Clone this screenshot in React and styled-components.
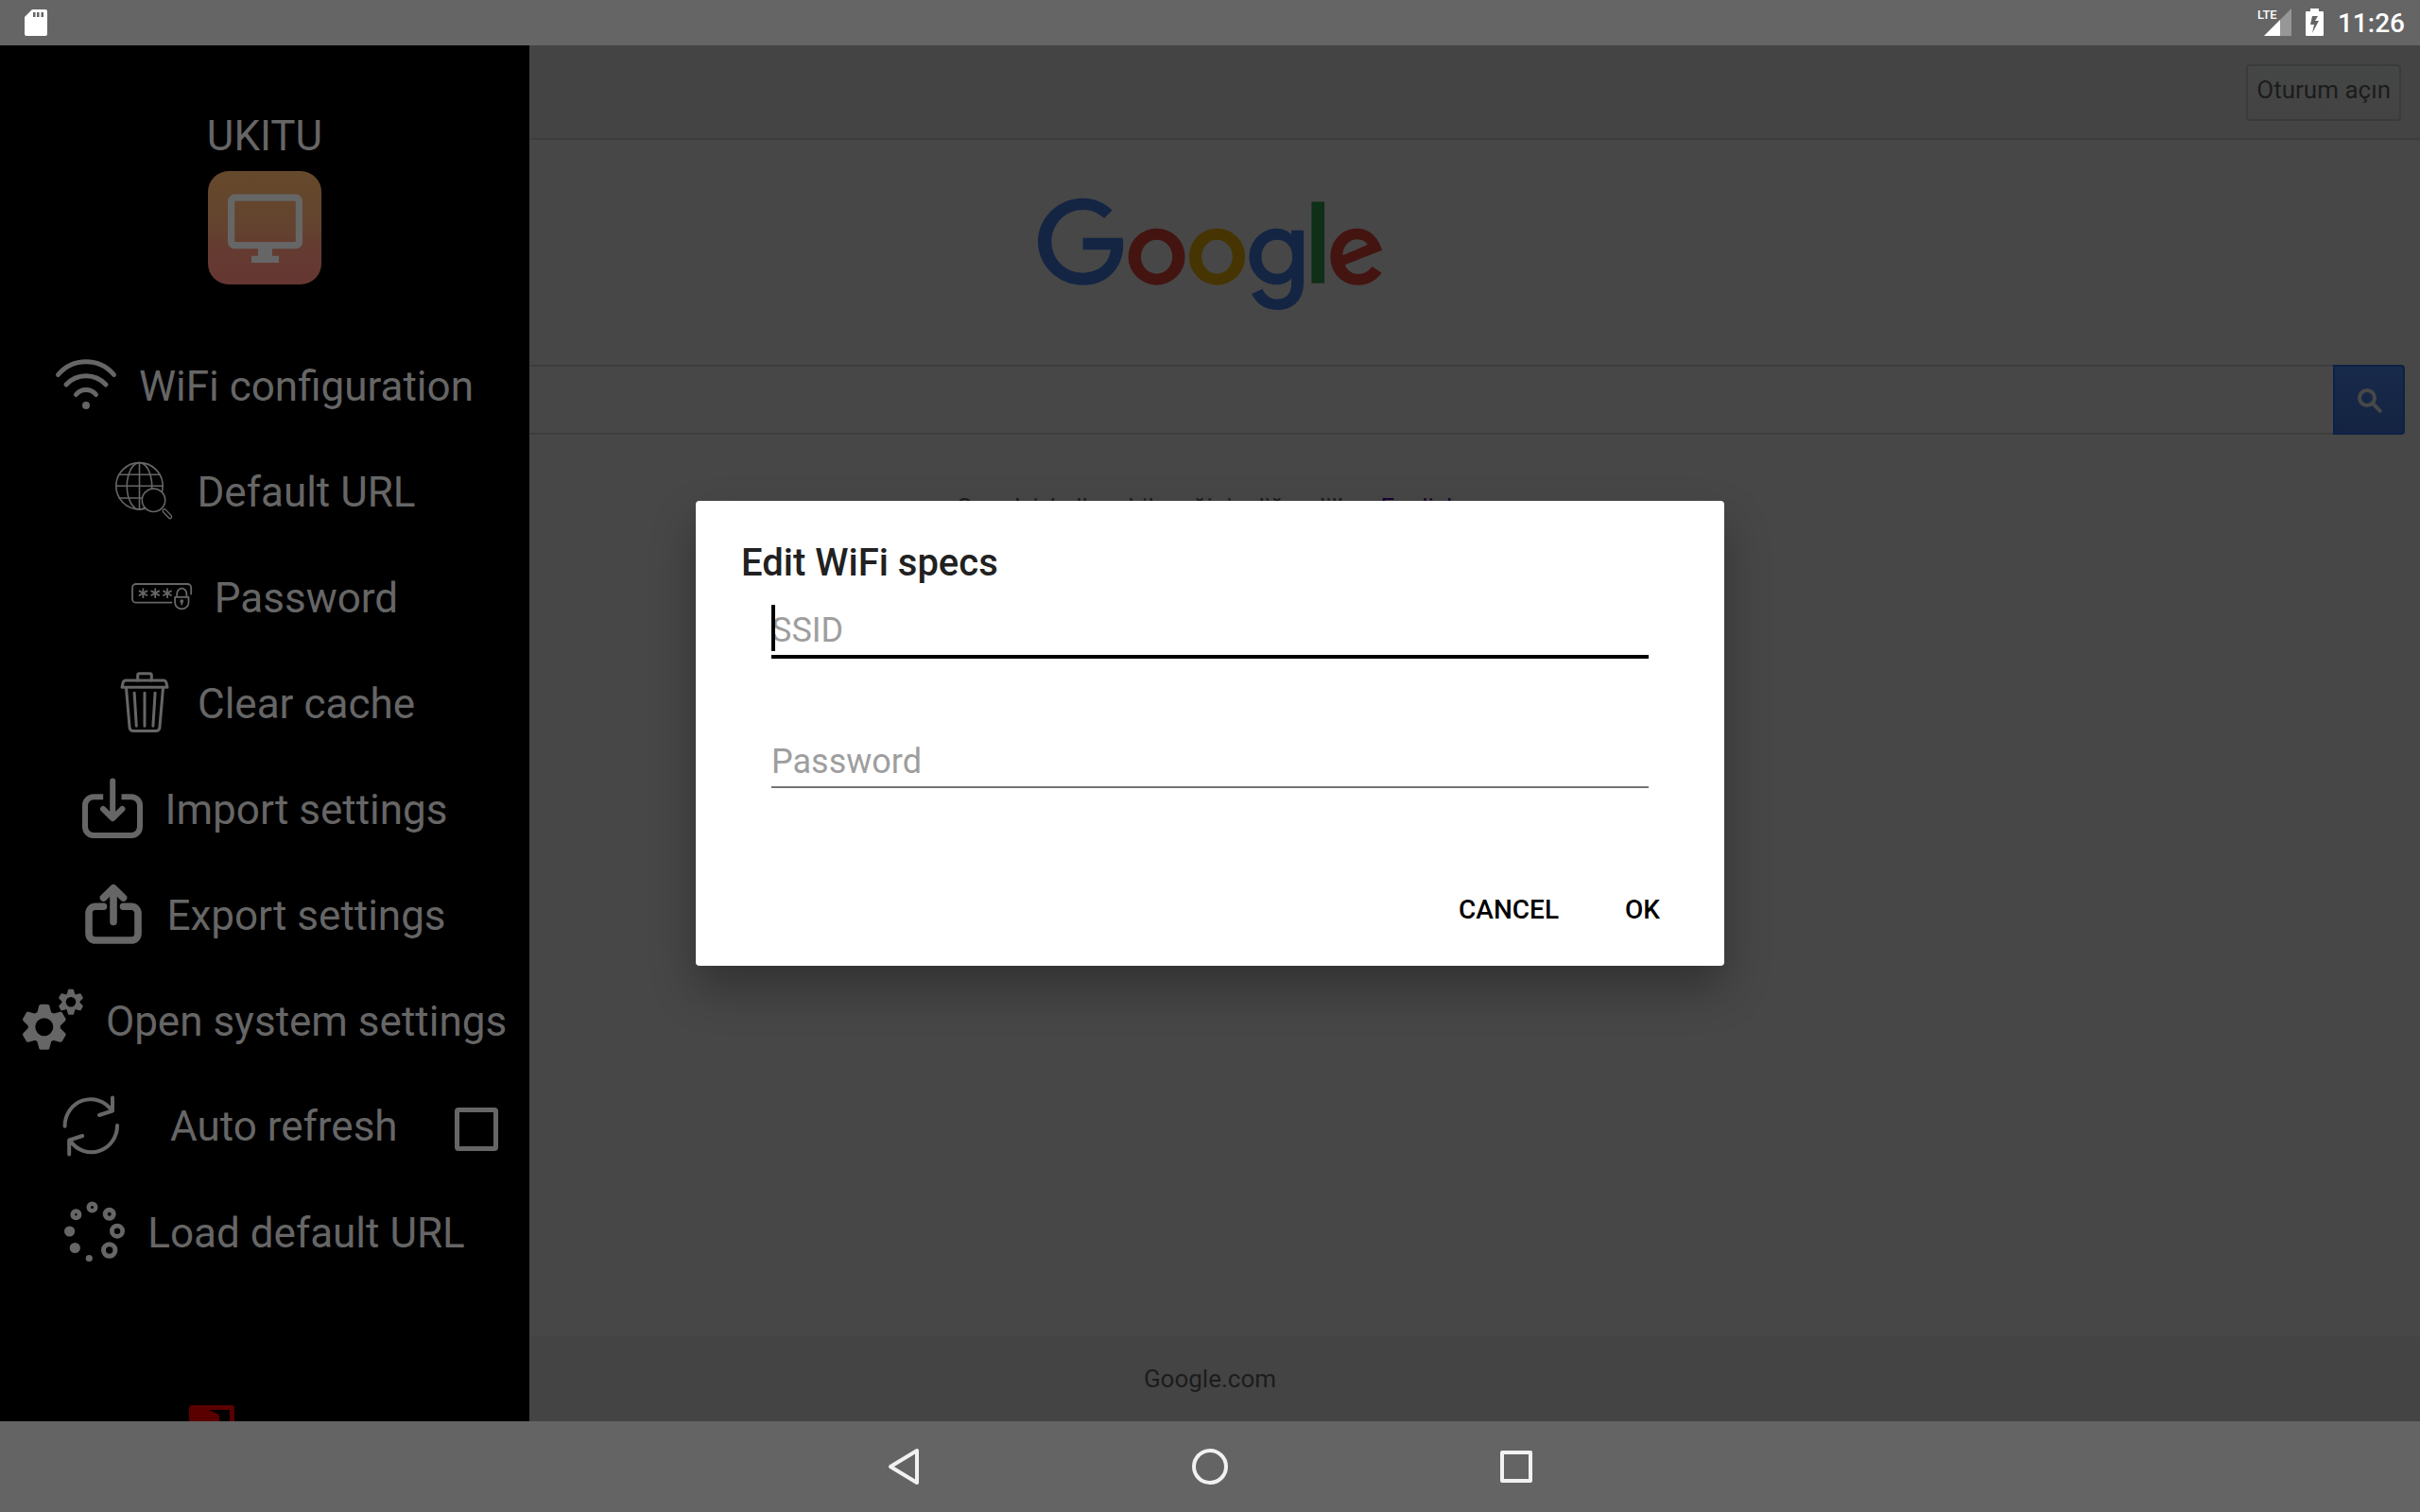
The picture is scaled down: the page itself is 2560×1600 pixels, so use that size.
import { useState } from "react";
import styled, { createGlobalStyle } from "styled-components";

const GlobalStyle = createGlobalStyle`
  *,
  *::before,
  *::after {
    box-sizing: border-box;
  }

  body {
    margin: 0;
    background: #000;
    font-family: Roboto, "Noto Sans", sans-serif;
  }

  button,
  input {
    font: inherit;
  }

  button {
    border: none;
    padding: 0;
    background: none;
    color: inherit;
    cursor: pointer;
  }

  svg {
    display: block;
    flex: none;
  }
`;

const Screen = styled.div`
  display: grid;
  grid-template-rows: 48px 1fr 96px;
  height: 100vh;
`;

/* Status bar */

const StatusBar = styled.header`
  display: flex;
  align-items: center;
  justify-content: space-between;
  padding: 0 16px 0 24px;
  background: #656565;
  color: #fff;
`;

const StatusIcons = styled.div`
  display: flex;
  align-items: center;
  gap: 15px;
`;

const Network = styled.div`
  display: flex;
  align-items: flex-start;
  position: relative;
  padding-left: 6px;
`;

const NetworkType = styled.span`
  position: absolute;
  top: 0;
  left: 0;
  font-size: 13px;
  line-height: 14px;
  font-weight: 500;
`;

const Clock = styled.time`
  padding-top: 2px;
  font-size: 28px;
  line-height: 32px;
  font-weight: 500;
`;

/* Browser page */

const Main = styled.main`
  position: relative;
  min-height: 0;
  overflow: hidden;
`;

const Page = styled.div`
  display: flex;
  flex-direction: column;
  align-items: center;
  height: 100%;
  background: #474747;
  color: #1c1c1c;
  font-size: 26px;
  line-height: 30px;
`;

const PageHeader = styled.div`
  display: flex;
  justify-content: flex-end;
  align-self: stretch;
  padding: 20px 20px 18px;
  border-bottom: 2px solid #3d3d3d;
  background: #444;
`;

const SignIn = styled.button`
  height: 60px;
  padding: 0 9px 6px;
  border: 2px solid #3b3b3b;
  border-radius: 4px;
  background: linear-gradient(#454646, #434343);
`;

const Logo = styled.div`
  padding: 61px 0 58px;
`;

const SearchForm = styled.form`
  display: flex;
  align-self: stretch;
  height: 74px;
  padding: 0 16px;
`;

const SearchInput = styled.input`
  flex: 1;
  min-width: 0;
  padding: 0 16px;
  border: 2px solid #3d3d3d;
  border-right: none;
  border-radius: 0;
  background: #474747;
  outline: none;
`;

const SearchButton = styled.button`
  display: grid;
  place-items: center;
  width: 76px;
  padding: 2px 0 0 2px;
  border: 2px solid #0c2147;
  border-radius: 0 4px 4px 0;
  background: linear-gradient(#182a4a, #142342);
`;

const Languages = styled.p`
  margin: 62px 0 0;
`;

const LanguageLink = styled.a`
  margin: 0 4px;
  color: #1c0530;
  text-decoration: none;
`;

const PageFooter = styled.footer`
  display: grid;
  place-items: center;
  align-self: stretch;
  height: 90px;
  margin-top: auto;
  background: #444;
`;

/* Drawer */

const Drawer = styled.aside`
  position: absolute;
  top: 0;
  bottom: 0;
  left: 0;
  display: flex;
  flex-direction: column;
  width: 560px;
  padding-top: 70px;
  overflow: hidden;
  background: #000;
  color: #666;
  font-size: 44px;
  line-height: 52px;
`;

const Brand = styled.div`
  display: flex;
  flex-direction: column;
  align-items: center;
  gap: 11px;
  margin-bottom: 51px;
`;

const BrandName = styled.h1`
  margin: 0;
  font-size: 44px;
  font-weight: 400;
`;

const DrawerItem = styled.button`
  display: flex;
  flex: none;
  align-items: center;
  justify-content: center;
  gap: 24px;
  height: 112px;
  white-space: nowrap;
`;

const ItemLabel = styled.span`
  padding-top: 2px;
`;

const DrawerToggle = styled.label`
  display: flex;
  flex: none;
  align-items: center;
  gap: 52px;
  height: 112px;
  padding-left: 64px;
  cursor: pointer;
`;

const Checkbox = styled.input`
  width: 46px;
  height: 46px;
  margin: 6px 0 0 8px;
  appearance: none;
  border: 5px solid #666;
  border-radius: 4px;

  &:checked {
    background: #666;
  }
`;

const ExitItem = styled(DrawerItem)`
  justify-content: flex-start;
  margin: 103px 0 0;
  padding-left: 200px;
  color: #5b0000;
`;

/* Dialog */

const DialogLayer = styled.div`
  position: absolute;
  inset: 0;
  display: grid;
  place-items: center;
`;

const Dialog = styled.form`
  display: flex;
  flex-direction: column;
  width: min(1088px, 90%);
  padding: 42px 48px 20px;
  border-radius: 4px;
  background: #fff;
  box-shadow: 0 24px 48px rgba(0, 0, 0, 0.3);
`;

const DialogTitle = styled.h2`
  margin: 0 0 20px;
  color: #212121;
  font-size: 40px;
  line-height: 48px;
  font-weight: 500;
`;

const Fields = styled.div`
  display: flex;
  flex-direction: column;
  gap: 82px;
  padding: 0 32px;
`;

const Field = styled.div`
  position: relative;
  padding-bottom: 3px;
  border-bottom: ${(props) =>
    props.$focused ? "4px solid #000" : "2px solid #757575"};
`;

const FieldInput = styled.input`
  display: block;
  width: 100%;
  height: 50px;
  padding: 4px 0 0;
  border: none;
  outline: none;
  background: none;
  caret-color: transparent;
  color: #212121;
  font-size: 36px;

  &::placeholder {
    color: #9e9e9e;
    opacity: 1;
  }
`;

const Caret = styled.span`
  position: absolute;
  top: 0;
  left: 0;
  width: 4px;
  height: 49px;
  background: #000;
`;

const Actions = styled.div`
  display: flex;
  justify-content: flex-end;
  gap: 30px;
  margin-top: 88px;
`;

const ActionButton = styled.button`
  height: 80px;
  padding: 0 20px;
  color: #000;
  font-size: 28px;
  font-weight: 500;
`;

/* Navigation bar */

const NavBar = styled.nav`
  display: flex;
  justify-content: center;
  background: #646464;
`;

const NavButton = styled.button`
  display: grid;
  place-items: center;
  width: 324px;
`;

function LineIcon({ width = 4, children }) {
  return (
    <svg
      width="64"
      height="64"
      viewBox="0 0 64 64"
      fill="none"
      stroke="currentColor"
      strokeWidth={width}
      strokeLinecap="round"
      strokeLinejoin="round"
      overflow="visible"
      aria-hidden="true"
    >
      {children}
    </svg>
  );
}

function WifiIcon() {
  return (
    <LineIcon width={5}>
      <path d="M2.5 20.5a38.6 38.6 0 0 1 59 0M11 31a28.3 28.3 0 0 1 42 0M21.5 41.5a13.7 13.7 0 0 1 21 0" />
      <circle cx="32" cy="53" r="4" fill="currentColor" stroke="none" />
    </LineIcon>
  );
}

function GlobeIcon() {
  return (
    <LineIcon width={1.6}>
      <circle cx="27.5" cy="26.3" r="24.7" />
      <ellipse cx="27.5" cy="26.3" rx="13.2" ry="24.7" />
      <path d="M27.5 1.6V51M6 14.3h43M2.8 26.3h49.4M6 39h43" />
      <circle cx="42.5" cy="41.3" r="12.2" fill="#000" />
      <path d="M54 52.6l5.8 6.2" strokeWidth="5" />
      <path d="M54 52.6l5.8 6.2" strokeWidth="2.2" stroke="#000" />
    </LineIcon>
  );
}

function PasswordIcon() {
  return (
    <LineIcon width={1.8}>
      <path d="M63.2 28.5V22a4 4 0 0 0-4-4H5a4 4 0 0 0-4 4v11.7a4 4 0 0 0 4 4h37.4" />
      {[12.4, 25.2, 38].map((x) => (
        <path
          key={x}
          d={`M${x} 23.2v9M${x - 4} 25.4l8 4.6M${x - 4} 30l8-4.6`}
        />
      ))}
      <path
        d="M46.1 31.8h14.4v5.6a7.2 7 0 0 1-14.4 0zM48.2 31.8v-3.4a5.1 5.8 0 0 1 10.2 0v3.4"
        fill="#000"
      />
      <circle cx="53.3" cy="36.2" r="1" fill="currentColor" />
      <path d="M53.3 36.5v3" />
    </LineIcon>
  );
}

function TrashIcon() {
  return (
    <LineIcon width={3}>
      <path d="M24.7 8V2.5a1.8 1.8 0 0 1 1.8-1.8h11a1.8 1.8 0 0 1 1.8 1.8V8" />
      <path d="M12 8h40a3 3 0 0 1 2.8 2.2l1.2 5.1H8l1.2-5.1A3 3 0 0 1 12 8z" />
      <path d="M12.5 16l3.6 42a4 4 0 0 0 4 3.6h23.8a4 4 0 0 0 4-3.6l3.6-42" />
      <path d="M21.1 21.2l2.2 35M32 21.2v35M43.1 21.2l-2.2 35" />
    </LineIcon>
  );
}

function ImportIcon() {
  return (
    <LineIcon width={6}>
      <path
        d="M22.2 19.3H12a9 9 0 0 0-9 9V51a9 9 0 0 0 9 9h40a9 9 0 0 0 9-9V28.3a9 9 0 0 0-9-9H41.5"
        strokeLinecap="butt"
      />
      <path d="M32.2 2.5v39M22 32l10.2 10L42.4 32" />
    </LineIcon>
  );
}

function ExportIcon() {
  return (
    <LineIcon width={7.6}>
      <path d="M21.5 23.3H13a7 7 0 0 0-7 7V52a7 7 0 0 0 7 7h38a7 7 0 0 0 7-7V30.3a7 7 0 0 0-7-7h-8.5" />
      <path d="M32 39.5V4M21.5 14L32 3.7 42.5 14" />
    </LineIcon>
  );
}

function Gear({ x, y, scale }) {
  return (
    <g transform={`translate(${x} ${y}) scale(${scale})`}>
      <circle r="13.3" strokeWidth="7.6" />
      {[0, 60, 120, 180, 240, 300].map((angle) => (
        <path
          key={angle}
          d="M-7.5-15l2-7.5Q-5-24-3.5-24h7Q5-24 5.500-22.5l2 7.5z"
          transform={`rotate(${angle})`}
          fill="currentColor"
          stroke="none"
        />
      ))}
    </g>
  );
}

function GearsIcon() {
  return (
    <LineIcon>
      <Gear x={22.8} y={38.7} scale={1} />
      <Gear x={51} y={12.3} scale={0.56} />
    </LineIcon>
  );
}

function RefreshIcon() {
  return (
    <LineIcon width={4}>
      <path d="M4.6 31.7A27.3 28 0 0 1 54 14.8M55 1.5v14L41 20" />
      <path d="M60 31A27.3 28 0 0 1 10.5 47.5M9.2 61.5v-15l14-4.5" />
    </LineIcon>
  );
}

const loaderDots = [
  [29.5, 5.5, 3.8, 4.4],
  [47.7, 12.7, 4.5, 5],
  [56, 30.7, 5.6, 4.8],
  [47.7, 51, 6.2, 5],
  [26.3, 59.5, 1.8, 3.6],
  [11.3, 48.5, 2.8, 5.6],
  [5.6, 31, 2.8, 5.6],
  [12.4, 13.3, 3.6, 4.8],
];

function LoaderIcon() {
  return (
    <LineIcon>
      {loaderDots.map(([cx, cy, r, width]) => (
        <circle key={`${cx}-${cy}`} cx={cx} cy={cy} r={r} strokeWidth={width} />
      ))}
    </LineIcon>
  );
}

function ExitIcon() {
  return (
    <svg width="64" height="64" viewBox="0 0 64 64" aria-hidden="true">
      <path
        fill="currentColor"
        fillRule="evenodd"
        d="M3 0h42a3 3 0 0 1 3 3v17h-5V5H21l9 4q2 1 2 3v36h11V36h5v14a3 3 0 0 1-3 3H32v11L2 52q-2-1-2-3V3a3 3 0 0 1 3-3zM50 18l14 10-14 10v-7H38v-6h12z"
      />
    </svg>
  );
}

function AppIcon() {
  return (
    <svg width="120" height="120" viewBox="0 0 120 120" aria-hidden="true">
      <defs>
        <linearGradient id="brand" x1="0" y1="0" x2="0" y2="1">
          <stop offset="0" stopColor="#66492b" />
          <stop offset="0.5" stopColor="#63432f" />
          <stop offset="0.65" stopColor="#643c31" />
          <stop offset="1" stopColor="#663632" />
        </linearGradient>
      </defs>
      <rect width="120" height="120" rx="22" fill="url(#brand)" />
      <rect
        x="24.6"
        y="28.2"
        width="71.8"
        height="50.5"
        rx="3.5"
        fill="none"
        stroke="#666"
        strokeWidth="7.2"
      />
      <path d="M53 80h15v9.7h7V97H46v-7.3h7z" fill="#666" />
    </svg>
  );
}

function GoogleLogo() {
  return (
    <svg
      width="364"
      height="119"
      viewBox="115 88 1093 357"
      fillRule="evenodd"
      role="img"
      aria-label="Google"
    >
      <path
        fill="#142544"
        d="M351 128C325 103 292 90 258 90 180 90 115 152 115 228s65 138 143 138c77 0 128-54 128-129 0-8-1-15-2-21H258v38h88c-5 44-40 73-88 73-56 0-100-44-100-99s44-101 100-101c26 0 49 10 67 27z"
      />
      <path
        fill="#441411"
        d="M402 276a90 90 0 1 1 180 0 90 90 0 1 1-180 0zm40 0a50 54 0 1 0 100 0 50 54 0 1 0-100 0z"
      />
      <path
        fill="#463502"
        d="M595 276a89 90 0 1 1 178 0 89 90 0 1 1-178 0zm40 0a49 54 0 1 0 98 0 49 54 0 1 0-98 0z"
      />
      <path
        fill="#142544"
        d="M959 192v165c0 57-34 88-84 88-42 0-69-25-81-51l34-16c8 18 23 33 47 33 29 0 45-18 45-50v-15h-1c-9 10-25 19-46 19-45 0-87-38-87-89s42-90 87-90c21 0 37 9 46 19h1v-13zm-134 84c0 32 22 54 50 54s48-22 48-54-20-54-48-54-50 22-50 54z"
      />
      <path fill="#0f2f18" d="M984 101h41v259h-41z" />
      <path
        fill="#441411"
        d="M1208 255c-13-43-42-69-79-69-48 0-85 38-85 90s38 90 88 90c33 0 58-16 75-39l-31-20c-10 15-24 24-44 24s-34-11-42-29zm-125 17c0-30 21-51 46-51 16 0 28 7 33 17z"
      />
    </svg>
  );
}

const menu = [
  { label: "WiFi configuration", icon: <WifiIcon /> },
  { label: "Default URL", icon: <GlobeIcon /> },
  { label: "Password", icon: <PasswordIcon /> },
  { label: "Clear cache", icon: <TrashIcon /> },
  { label: "Import settings", icon: <ImportIcon /> },
  { label: "Export settings", icon: <ExportIcon /> },
  { label: "Open system settings", icon: <GearsIcon /> },
];

function Status() {
  return (
    <StatusBar>
      <svg width="28" height="28" viewBox="0 0 28 28" aria-hidden="true">
        <path
          fill="#fff"
          fillRule="evenodd"
          d="M10 0h14a2 2 0 0 1 2 2v24a2 2 0 0 1-2 2H4a2 2 0 0 1-2-2V8zM11 3v5h2.5V3zm4 0v5h2.5V3zm4.5 0v5H22V3z"
        />
      </svg>
      <StatusIcons>
        <Network>
          <NetworkType>LTE</NetworkType>
          <svg width="30" height="30" viewBox="0 0 30 30" aria-hidden="true">
            <path d="M30 0v29H1z" fill="#979797" />
            <path d="M18 12v17H1z" fill="#fff" />
          </svg>
        </Network>
        <svg width="19" height="30" viewBox="0 0 19 30" aria-hidden="true">
          <path
            fill="#fff"
            fillRule="evenodd"
            d="M5 0h9v3h4q1 0 1 1v24q0 1-1 1H1q-1 0-1-1V4q0-1 1-1h4zM7 8L5 17h4l-2 9 7-13h-4l3-5z"
          />
        </svg>
        <Clock>11:26</Clock>
      </StatusIcons>
    </StatusBar>
  );
}

function BrowserPage() {
  return (
    <Page>
      <PageHeader>
        <SignIn type="button">Oturum açın</SignIn>
      </PageHeader>
      <Logo>
        <GoogleLogo />
      </Logo>
      <SearchForm onSubmit={(e) => e.preventDefault()}>
        <SearchInput type="text" aria-label="Google" />
        <SearchButton type="submit" aria-label="Google">
          <svg
            width="26"
            height="26"
            viewBox="0 0 26 26"
            fill="none"
            stroke="#484848"
            strokeWidth="4"
          >
            <circle cx="10" cy="10" r="8" />
            <path d="M16 16l9 9" />
          </svg>
        </SearchButton>
      </SearchForm>
      <Languages>
        Google'ı kullanabileceğiniz diğer diller:{" "}
        <LanguageLink href="#english">English</LanguageLink>
      </Languages>
      <PageFooter>Google.com</PageFooter>
    </Page>
  );
}

function SettingsDrawer() {
  const [autoRefresh, setAutoRefresh] = useState(false);

  return (
    <Drawer>
      <Brand>
        <BrandName>UKITU</BrandName>
        <AppIcon />
      </Brand>
      {menu.map(({ label, icon }) => (
        <DrawerItem key={label} type="button">
          {icon}
          <ItemLabel>{label}</ItemLabel>
        </DrawerItem>
      ))}
      <DrawerToggle>
        <RefreshIcon />
        Auto refresh
        <Checkbox
          type="checkbox"
          checked={autoRefresh}
          onChange={() => setAutoRefresh(!autoRefresh)}
        />
      </DrawerToggle>
      <DrawerItem type="button">
        <LoaderIcon />
        <ItemLabel>Load default URL</ItemLabel>
      </DrawerItem>
      <ExitItem type="button" aria-label="Exit">
        <ExitIcon />
      </ExitItem>
    </Drawer>
  );
}

function WifiDialog() {
  const [ssid, setSsid] = useState("");
  const [password, setPassword] = useState("");

  return (
    <DialogLayer>
      <Dialog
        role="dialog"
        aria-labelledby="wifi-title"
        onSubmit={(e) => e.preventDefault()}
      >
        <DialogTitle id="wifi-title">Edit WiFi specs</DialogTitle>
        <Fields>
          <Field $focused>
            <FieldInput
              type="text"
              aria-label="SSID"
              placeholder="SSID"
              value={ssid}
              onChange={(e) => setSsid(e.target.value)}
            />
            {!ssid && <Caret />}
          </Field>
          <Field>
            <FieldInput
              type="password"
              aria-label="Password"
              placeholder="Password"
              value={password}
              onChange={(e) => setPassword(e.target.value)}
            />
          </Field>
        </Fields>
        <Actions>
          <ActionButton type="button">CANCEL</ActionButton>
          <ActionButton type="submit">OK</ActionButton>
        </Actions>
      </Dialog>
    </DialogLayer>
  );
}

function Navigation() {
  const icon = {
    width: 40,
    height: 40,
    viewBox: "0 0 40 40",
    fill: "none",
    stroke: "#f1f1f1",
    strokeWidth: 4,
    strokeLinejoin: "round",
  };

  return (
    <NavBar>
      <NavButton type="button" aria-label="Back">
        <svg {...icon}>
          <path d="M34 3v34L6 20z" />
        </svg>
      </NavButton>
      <NavButton type="button" aria-label="Home">
        <svg {...icon}>
          <circle cx="20" cy="20" r="17" />
        </svg>
      </NavButton>
      <NavButton type="button" aria-label="Overview">
        <svg {...icon}>
          <rect x="5" y="5" width="30" height="30" />
        </svg>
      </NavButton>
    </NavBar>
  );
}

function App() {
  return (
    <>
      <GlobalStyle />
      <Screen>
        <Status />
        <Main>
          <BrowserPage />
          <SettingsDrawer />
          <WifiDialog />
        </Main>
        <Navigation />
      </Screen>
    </>
  );
}

export default App;
